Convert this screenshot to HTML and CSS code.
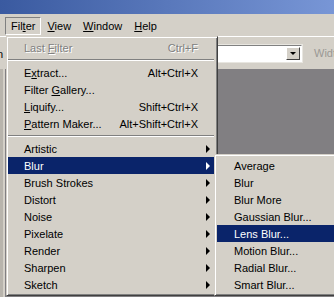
FILE: index.html
```html
<!DOCTYPE html>
<html lang="en">
<head>
  <meta charset="UTF-8">
  <title>Filter menu</title>
  <link rel="stylesheet" href="styles.css">
</head>
<body>
  <div class="titlebar"></div>

  <div class="menubar">
    <span class="menu-title open">Fil<u>t</u>er</span>
    <span class="menu-title"><u>V</u>iew</span>
    <span class="menu-title"><u>W</u>indow</span>
    <span class="menu-title"><u>H</u>elp</span>
  </div>

  <div class="toolbar">
    <span class="cut-label">n</span>
    <div class="combo"><span class="combo-btn"><span class="down"></span></span></div>
    <span class="tool-label">Width:</span>
  </div>

  <div class="workspace"><div class="side"></div></div>

  <div class="menu filter-menu">
    <div class="item disabled"><span>Last <u>F</u>ilter</span><span class="key">Ctrl+F</span></div>
    <div class="sep"></div>
    <div class="item"><span>E<u>x</u>tract...</span><span class="key">Alt+Ctrl+X</span></div>
    <div class="item"><span>Filter <u>G</u>allery...</span></div>
    <div class="item"><span><u>L</u>iquify...</span><span class="key">Shift+Ctrl+X</span></div>
    <div class="item"><span><u>P</u>attern Maker...</span><span class="key">Alt+Shift+Ctrl+X</span></div>
    <div class="sep"></div>
    <div class="item sub"><span>Artistic</span><span class="arrow"></span></div>
    <div class="item sub active"><span>Blur</span><span class="arrow"></span></div>
    <div class="item sub"><span>Brush Strokes</span><span class="arrow"></span></div>
    <div class="item sub"><span>Distort</span><span class="arrow"></span></div>
    <div class="item sub"><span>Noise</span><span class="arrow"></span></div>
    <div class="item sub"><span>Pixelate</span><span class="arrow"></span></div>
    <div class="item sub"><span>Render</span><span class="arrow"></span></div>
    <div class="item sub"><span>Sharpen</span><span class="arrow"></span></div>
    <div class="item sub"><span>Sketch</span><span class="arrow"></span></div>
  </div>

  <div class="menu blur-menu">
    <div class="item"><span>Average</span></div>
    <div class="item"><span>Blur</span></div>
    <div class="item"><span>Blur More</span></div>
    <div class="item"><span>Gaussian Blur...</span></div>
    <div class="item active"><span>Lens Blur...</span></div>
    <div class="item"><span>Motion Blur...</span></div>
    <div class="item"><span>Radial Blur...</span></div>
    <div class="item"><span>Smart Blur...</span></div>
  </div>
</body>
</html>
```

FILE: styles.css
```css
body {
  margin: 0;
  width: 334px;
  height: 297px;
  overflow: hidden;
  position: relative;
  font-family: "Liberation Sans", Arial, sans-serif;
  font-size: 11px;
  color: #000;
  background: #d4d0c8;
}
u {
  text-decoration: underline;
  text-underline-offset: 1px;
}
.titlebar {
  height: 14px;
  background: linear-gradient(to right, #3a5aa0, #7896d6);
}
.menubar {
  display: flex;
  align-items: flex-start;
  height: 22px;
  padding: 3px 0 0 5px;
  box-sizing: border-box;
  background: #d4d0c8;
}
.menu-title {
  height: 16px;
  line-height: 16px;
  padding: 0 5px;
  border: 1px solid transparent;
}
.menu-title.open {
  border-color: #808080 #fff #fff #808080;
}
.toolbar {
  display: flex;
  align-items: center;
  height: 33px;
  box-sizing: border-box;
  border-top: 1px solid #fff;
  background: #d4d0c8;
}
.toolbar > * {
  flex-shrink: 0;
}
.cut-label {
  width: 4px;
  margin-left: -3px;
  margin-top: 2px;
}
.combo {
  display: flex;
  justify-content: flex-end;
  align-items: center;
  width: 84px;
  height: 15px;
  margin-left: 215px;
  background: #fff;
  border: 1px solid;
  border-color: #808080 #fff #fff #808080;
  box-shadow: 0 0 0 1px #e8e6e0;
}
.combo-btn {
  display: flex;
  justify-content: center;
  align-items: center;
  width: 12px;
  height: 11px;
  margin-right: 1px;
  background: #d4d0c8;
  border: 1px solid;
  border-color: #fff #404040 #404040 #fff;
}
.down {
  border-left: 3px solid transparent;
  border-right: 3px solid transparent;
  border-top: 3px solid #000;
}
.tool-label {
  margin-left: 12px;
  color: #9a9894;
  white-space: nowrap;
}
.workspace {
  height: 228px;
  background: #817f82;
}
.side {
  width: 3px;
  height: 100%;
  background: #b8b4ac;
  border-right: 2px solid #d4d0c8;
}

.menu {
  position: absolute;
  background: #d4d0c8;
  border: 1px solid;
  border-color: #d4d0c8 #404040 #404040 #d4d0c8;
  box-shadow: inset 1px 1px #fff, inset -1px -1px #808080;
}
.filter-menu {
  left: 6px;
  top: 36px;
  width: 206px;
  padding: 2px 3px 2px 1px;
}
.blur-menu {
  left: 214px;
  top: 154px;
  width: 120px;
  padding: 2px;
}
.item {
  display: flex;
  align-items: center;
  height: 17px;
  padding: 0 16px;
  white-space: nowrap;
}
.blur-menu .item {
  padding-left: 17px;
}
.item.sub {
  padding-right: 4px;
}
.key {
  margin-left: auto;
}
.arrow {
  margin-left: auto;
  border-top: 4px solid transparent;
  border-bottom: 4px solid transparent;
  border-left: 4px solid #000;
}
.item.active {
  background: #0a246a;
  color: #fff;
}
.item.active .arrow {
  border-left-color: #fff;
}
.item.disabled {
  color: #808080;
  text-shadow: 1px 1px 0 #fff;
}
.sep {
  margin: 3px 0;
  border-top: 1px solid #808080;
  border-bottom: 1px solid #fff;
}
```
